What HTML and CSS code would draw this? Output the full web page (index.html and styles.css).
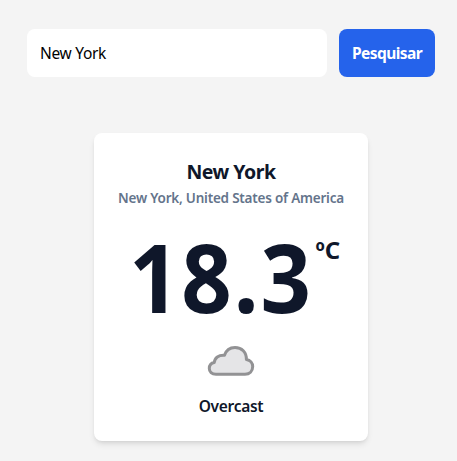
FILE: index.html
```html
<!DOCTYPE html>
<html lang="pt-BR">
<head>
<meta charset="utf-8">
<title>New York</title>
<link rel="stylesheet" href="styles.css">
</head>
<body>
<main class="page">
  <form class="search">
    <input class="search-input" type="text" value="New York">
    <button class="search-button" type="button">Pesquisar</button>
  </form>
  <section class="card">
    <h1 class="city">New York</h1>
    <p class="region">New York, United States of America</p>
    <div class="temperature">
      <span class="value">18.3</span><span class="unit">ºC</span>
    </div>
    <svg class="icon" viewBox="0 0 64 64" aria-hidden="true">
      <path d="M17 45.3 C12.7 45.3 10.3 42.8 10.3 39.5 C10.3 36.2 12.3 34 15.3 33.5 C15.6 28.8 19.6 25.8 25.5 26.2 C27 21.5 31 18.4 36 18.4 C42.8 18.4 47.5 23.2 47.4 30.4 C51.3 31 53.7 34 53.7 37.6 C53.7 42.2 50.5 45.3 46 45.3 Z"/>
    </svg>
    <p class="condition">Overcast</p>
  </section>
</main>
</body>
</html>
```
FILE: styles.css
```css
* { box-sizing: border-box; margin: 0; }
body {
  background: #f4f4f4;
  color: #0f172a;
  font-family: "Segoe UI", "Noto Sans", sans-serif;
}
.page {
  height: 461px;
  padding: 29px 22px 20px 27px;
  display: flex;
  flex-direction: column;
}
.search { display: flex; gap: 12px; }
.search-input {
  width: 300px;
  height: 48px;
  padding: 0 13px;
  border: 0;
  border-radius: 8px;
  outline: 0;
  background: #fff;
  color: #000;
  font: 400 15.5px/24px "Segoe UI", "Noto Sans", sans-serif;
  letter-spacing: -0.3px;
}
.search-button {
  width: 96px;
  height: 48px;
  padding: 0;
  border: 0;
  border-radius: 8px;
  background: #2563eb;
  color: #fff;
  font: 700 15.5px/24px "Segoe UI", "Noto Sans", sans-serif;
  letter-spacing: -0.55px;
}
.card {
  width: 274px;
  height: 308px;
  margin: 56px 0 0 67px;
  padding: 25px 0 22px;
  border-radius: 8px;
  background: #fff;
  box-shadow: 0 4px 6px -1px rgb(0 0 0 / 10%), 0 2px 4px -2px rgb(0 0 0 / 10%);
  display: flex;
  flex-direction: column;
  align-items: center;
  white-space: nowrap;
}
.city { font-size: 19.5px; font-weight: 700; line-height: 28px; letter-spacing: -0.5px; }
.region {
  margin-top: 2px;
  color: #64748b;
  font-size: 13.5px;
  font-weight: 600;
  line-height: 20px;
  letter-spacing: -0.22px;
}
.temperature { display: flex; margin: 24px 0 0; height: 96px; }
.value {
  font-size: 95px;
  font-weight: 700;
  line-height: 88px;
  letter-spacing: 2px;
  transform: scaleX(.93);
}
.unit { margin-left: -4px; font-size: 24px; font-weight: 700; line-height: 36px; }
.icon { flex: none; width: 64px; height: 64px; margin-top: 1px; }
.icon path { fill: #e5e5e7; stroke: #929294; stroke-width: 3; stroke-linejoin: round; }
.condition { font-size: 15.5px; font-weight: 600; line-height: 26px; letter-spacing: -0.3px; }
```
